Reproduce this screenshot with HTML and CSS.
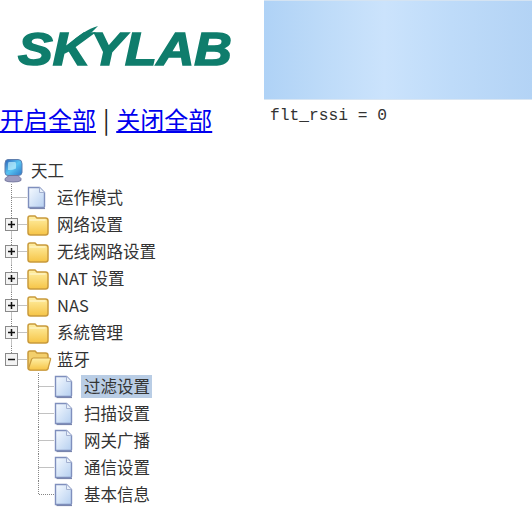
FILE: index.html
```html
<!DOCTYPE html>
<html lang="zh">
<head>
    <meta charset="UTF-8">
    <meta name="viewport" content="width=device-width, initial-scale=1.0">
    <title>天工</title>
    <link rel="stylesheet" href="styles.css">
</head>
<body>
    <svg class="defs" width="0" height="0">
        <defs>
            <linearGradient id="pageFill" x1="0" y1="0" x2="1" y2="1">
                <stop offset="0" stop-color="#f6faff"/>
                <stop offset="1" stop-color="#b5cff0"/>
            </linearGradient>
            <linearGradient id="folderFill" x1="0" y1="0" x2="0" y2="1">
                <stop offset="0" stop-color="#fff0a6"/>
                <stop offset="1" stop-color="#f6c446"/>
            </linearGradient>
            <linearGradient id="screenFill" x1="0" y1="0" x2="1" y2="1">
                <stop offset="0" stop-color="#2a5fb5"/>
                <stop offset=".5" stop-color="#58c4f2"/>
                <stop offset="1" stop-color="#2f78c8"/>
            </linearGradient>
            <symbol id="root" viewBox="0 0 27 27">
                <path d="M8 2.500h10q4 0 4 4v9q0 3-4 3H8q-3 0-3-3v-9q0-4 3-4z" fill="url(#screenFill)" stroke="#5f7fae"/>
                <path d="M9 5h6q1 0 1 1.500v5q-4 2-8 1.500v-6Q8 5 9 5z" fill="#bdeefc" opacity=".7"/>
                <path d="M9 18.500h9l3 3v2q-2 1.500-8 1.500t-8-1.500v-2z" fill="#9d9cc0" stroke="#6d7299" stroke-width=".8"/>
            </symbol>
            <symbol id="page" viewBox="0 0 27 27">
                <path d="M1.500 3.500h11l5 5v14a1 1 0 0 1-1 1h-15z" fill="url(#pageFill)" stroke="#7f8fbd" stroke-width="1.400"/>
                <path d="M12.500 3.500v5h5" fill="#e8f0fa" stroke="#a3b0d0"/>
                <path d="M2.500 24.500h15.500" stroke="#7a86ad" stroke-width="1.200"/>
            </symbol>
            <symbol id="folder" viewBox="0 0 27 27">
                <path d="M1 7q0-2 2-2h5l2 2h8.500q2.500 0 2.500 2.500v12q0 2.500-2.500 2.500h-15q-2.500 0-2.500-2.500z" fill="url(#folderFill)" stroke="#c99a3c" stroke-width="1.500"/>
                <path d="M2.500 9h16" stroke="#fff9d8"/>
            </symbol>
            <symbol id="folderOpen" viewBox="0 0 27 27">
                <path d="M1 7q0-2 2-2h5l2 2h8.500q2.500 0 2.500 2.500v12q0 2.500-2.500 2.500h-15q-2.500 0-2.500-2.500z" fill="#f3cf6c" stroke="#c99a3c" stroke-width="1.500"/>
                <path d="M1.500 22.500l3-9q.5-1.500 2-1.500h16q1.500 0 1 1.500L21 22.500q-.5 1.500-2 1.500H3z" fill="url(#folderFill)" stroke="#c99a3c" stroke-width="1.200"/>
            </symbol>
            <symbol id="join" viewBox="0 0 27 27">
                <path d="M11.500 0v27M11.500 13.500H27" class="dots"/>
            </symbol>
            <symbol id="joinEnd" viewBox="0 0 27 27">
                <path d="M11.500 0v13.500H27" class="dots"/>
            </symbol>
            <symbol id="plus" viewBox="0 0 27 27">
                <path d="M11.500 0v7.500M11.500 19.500v7.500M17.500 13.500H27" class="dots"/>
                <rect x="5.500" y="7.500" width="12" height="12" fill="#f3f3f3" stroke="#8a8a8a"/>
                <path d="M8 13.500h7M11.500 10v7" stroke="#111" stroke-width="1.500"/>
            </symbol>
            <symbol id="minus" viewBox="0 0 27 27">
                <path d="M11.500 0v7.500M17.500 13.500H27" class="dots"/>
                <rect x="5.500" y="7.500" width="12" height="12" fill="#f3f3f3" stroke="#8a8a8a"/>
                <path d="M8 13.500h7" stroke="#111" stroke-width="1.500"/>
            </symbol>
        </defs>
    </svg>

    <div class="header">
        <div class="brand">
            <div class="logo">
                <span class="logo-text">SKYLAB</span>
                <svg class="swoosh" width="40" height="30"><path d="M2 22C12 12 22 6 32 3l-6 6C18 13 10 18 5 25z"/></svg>
            </div>
            <div class="switches"><a href="#">开启全部</a> | <a href="#">关闭全部</a></div>
        </div>
        <div class="side">
            <div class="banner"></div>
            <pre class="debug">flt_rssi = 0</pre>
        </div>
    </div>

    <div class="tree">
        <div class="row"><svg class="cell"><use href="#root"/></svg><a class="label label-root" href="#">天工</a></div>
        <div class="row"><svg class="cell"><use href="#join"/></svg><svg class="cell"><use href="#page"/></svg><a class="label" href="#">运作模式</a></div>
        <div class="row"><svg class="cell"><use href="#plus"/></svg><svg class="cell"><use href="#folder"/></svg><a class="label" href="#">网络设置</a></div>
        <div class="row"><svg class="cell"><use href="#plus"/></svg><svg class="cell"><use href="#folder"/></svg><a class="label" href="#">无线网路设置</a></div>
        <div class="row"><svg class="cell"><use href="#plus"/></svg><svg class="cell"><use href="#folder"/></svg><a class="label" href="#">NAT 设置</a></div>
        <div class="row"><svg class="cell"><use href="#plus"/></svg><svg class="cell"><use href="#folder"/></svg><a class="label" href="#">NAS</a></div>
        <div class="row"><svg class="cell"><use href="#plus"/></svg><svg class="cell"><use href="#folder"/></svg><a class="label" href="#">系統管理</a></div>
        <div class="row"><svg class="cell"><use href="#minus"/></svg><svg class="cell"><use href="#folderOpen"/></svg><a class="label" href="#">蓝牙</a></div>
        <div class="row"><div class="cell"></div><svg class="cell"><use href="#join"/></svg><svg class="cell"><use href="#page"/></svg><a class="label selected" href="#">过滤设置</a></div>
        <div class="row"><div class="cell"></div><svg class="cell"><use href="#join"/></svg><svg class="cell"><use href="#page"/></svg><a class="label" href="#">扫描设置</a></div>
        <div class="row"><div class="cell"></div><svg class="cell"><use href="#join"/></svg><svg class="cell"><use href="#page"/></svg><a class="label" href="#">网关广播</a></div>
        <div class="row"><div class="cell"></div><svg class="cell"><use href="#join"/></svg><svg class="cell"><use href="#page"/></svg><a class="label" href="#">通信设置</a></div>
        <div class="row"><div class="cell"></div><svg class="cell"><use href="#joinEnd"/></svg><svg class="cell"><use href="#page"/></svg><a class="label" href="#">基本信息</a></div>
    </div>
</body>
</html>
```

FILE: styles.css
```css
* {
    margin: 0;
    padding: 0;
    box-sizing: border-box;
}

body {
    font-family: "Noto Sans CJK SC", "Noto Sans", sans-serif;
    background-color: white;
    color: #333;
    overflow: hidden;
}

.defs {
    display: block;
    height: 0;
}

.dots {
    fill: none;
    stroke: #858585;
    stroke-dasharray: 1 1;
}

.header {
    display: grid;
    grid-template-columns: 264px 268px;
    height: 157px;
}

.logo {
    position: relative;
    height: 100px;
    padding: 21px 0 0 18px;
}

.logo-text {
    display: inline-block;
    font-family: "Liberation Sans", Arial, sans-serif;
    font-weight: bold;
    font-style: italic;
    font-size: 46px;
    line-height: 56px;
    color: #0f7d6c;
    -webkit-text-stroke: 1.600px #0f7d6c;
    transform: scaleX(1.130);
    transform-origin: left center;
    filter: blur(0.4px);
}

.swoosh {
    position: absolute;
    left: 66px;
    top: 23px;
    fill: #0f7d6c;
}

.switches {
    font-size: 24px;
    line-height: 40px;
    margin-top: -1px;
    word-spacing: 1.500px;
    color: #222;
}

.switches a {
    color: #0000ee;
}

.banner {
    height: 100px;
    background: linear-gradient(90deg, #afd2f6 0%, #bcdaf8 20%, #cbe3fc 45%, #bedbf9 70%, #b3d3f5 100%);
    border-top: 1px solid #d4e3f2;
    border-bottom: 1px solid #d9e6f3;
}

.debug {
    font-family: "Liberation Mono", "DejaVu Sans Mono", monospace;
    font-size: 16.250px;
    line-height: 30px;
    padding: 1px 0 0 6px;
    color: #333;
}

.row {
    display: flex;
    align-items: center;
    height: 27px;
}

.cell {
    display: block;
    flex: none;
    width: 27px;
    height: 27px;
}

.label {
    margin-left: 3px;
    font-size: 16.500px;
    line-height: 23px;
    color: #333;
    text-decoration: none;
}

.label-root {
    margin-left: 4px;
}

.selected {
    margin-left: 0;
    padding: 0 2px 0 3px;
    background: #b9cde5;
}
```
